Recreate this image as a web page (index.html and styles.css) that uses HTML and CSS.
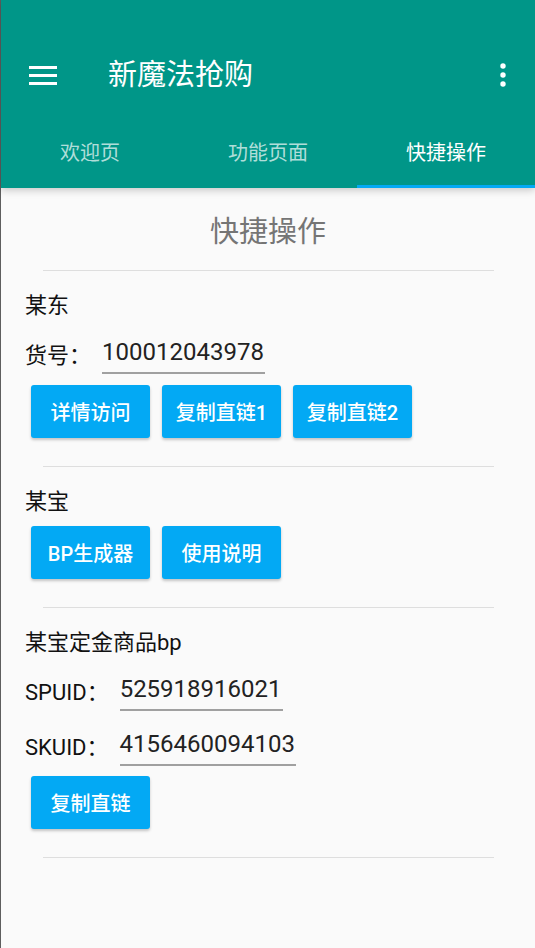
FILE: index.html
```html
<!DOCTYPE html>
<html lang="zh-CN">
<head>
<meta charset="utf-8">
<title>新魔法抢购</title>
<link rel="stylesheet" href="styles.css">
</head>
<body>
<div class="app">
  <header class="appbar">
    <div class="status"></div>
    <div class="toolbar">
      <svg class="menu" width="28" height="20" viewBox="0 0 28 20">
        <rect x="0" y="1" width="28" height="3" fill="#fff"/>
        <rect x="0" y="9" width="28" height="3" fill="#fff"/>
        <rect x="0" y="17" width="28" height="3" fill="#fff"/>
      </svg>
      <div class="title">新魔法抢购</div>
      <svg class="more" width="6" height="24" viewBox="0 0 6 24">
        <circle cx="3" cy="3" r="2.7" fill="#fff"/>
        <circle cx="3" cy="12" r="2.7" fill="#fff"/>
        <circle cx="3" cy="21" r="2.7" fill="#fff"/>
      </svg>
    </div>
    <nav class="tabs">
      <div class="tab">欢迎页</div>
      <div class="tab">功能页面</div>
      <div class="tab active">快捷操作</div>
    </nav>
  </header>

  <main class="content">
    <h1 class="page-title">快捷操作</h1>
    <hr class="divider">

    <section class="section">
      <div class="sec-title">某东</div>
      <div class="field-row">
        <span class="label">货号：</span>
        <span class="field">100012043978</span>
      </div>
      <div class="btn-row">
        <button class="btn">详情访问</button>
        <button class="btn">复制直链1</button>
        <button class="btn">复制直链2</button>
      </div>
    </section>
    <hr class="divider">

    <section class="section">
      <div class="sec-title">某宝</div>
      <div class="btn-row tight">
        <button class="btn">BP生成器</button>
        <button class="btn">使用说明</button>
      </div>
    </section>
    <hr class="divider">

    <section class="section">
      <div class="sec-title">某宝定金商品bp</div>
      <div class="field-row">
        <span class="label">SPUID：</span>
        <span class="field">525918916021</span>
      </div>
      <div class="field-row second">
        <span class="label">SKUID：</span>
        <span class="field">4156460094103</span>
      </div>
      <div class="btn-row short">
        <button class="btn">复制直链</button>
      </div>
    </section>
    <hr class="divider">
  </main>
</div>
</body>
</html>
```

FILE: styles.css
```css
html, body {
  margin: 0;
  padding: 0;
  height: 100%;
  background: #fafafa;
}
body {
  font-family: Roboto, "Noto Sans CJK SC", sans-serif;
}
.app {
  min-height: 100%;
  border-left: 1px solid #5e5e5e;
  box-sizing: border-box;
  background: #fafafa;
}
.appbar {
  background: #009688;
  height: 188px;
  box-shadow: 0 2px 8px rgba(0, 0, 0, 0.22);
  display: flex;
  flex-direction: column;
  position: relative;
}
.status {
  height: 30px;
}
.toolbar {
  height: 90px;
  display: flex;
  align-items: center;
  padding: 0 29px 0 28px;
}
.menu {
  flex: none;
  display: block;
}
.title {
  flex: 1;
  margin-left: 51px;
  color: #fff;
  font-size: 29px;
  line-height: 40px;
}
.more {
  flex: none;
  display: block;
}
.tabs {
  flex: 1;
  display: grid;
  grid-template-columns: 1fr 1fr 1fr;
}
.tab {
  display: flex;
  align-items: center;
  justify-content: center;
  color: rgba(255, 255, 255, 0.7);
  font-size: 20px;
  padding-bottom: 2px;
  box-sizing: border-box;
  border-bottom: 3px solid transparent;
}
.tab.active {
  color: #fff;
  border-bottom-color: #03a9f4;
}
.content {
  padding: 24px 0 0;
}
.page-title {
  margin: 0;
  font-weight: 400;
  font-size: 29px;
  line-height: 40px;
  text-align: center;
  color: #757575;
}
.divider {
  margin: 18px 41px 0 42px;
  border: 0;
  height: 1px;
  background: #dedede;
}
.section {
  padding: 20px 0 28px 24px;
}
.sec-title {
  font-size: 22px;
  line-height: 30px;
  color: #111;
}
.field-row {
  display: flex;
  align-items: center;
  margin-top: 11px;
  height: 42px;
}
.field-row.second {
  margin-top: 13px;
}
.label {
  font-size: 22px;
  color: #111;
  margin-right: 11px;
}
.field {
  font-size: 24px;
  line-height: 40px;
  color: #222;
  border-bottom: 2px solid #a0a0a0;
  padding: 0 1px 0 0;
}
.btn-row {
  display: flex;
  gap: 12px;
  margin-top: 11px;
  padding-left: 6px;
}
.btn-row.tight {
  margin-top: 9px;
}
.btn-row.short {
  margin-top: 10px;
}
.btn {
  width: 119px;
  height: 53px;
  border: 0;
  border-radius: 3px;
  background: #03a9f4;
  color: #fff;
  font-family: Roboto, "Noto Sans CJK SC", sans-serif;
  font-size: 20px;
  font-weight: 500;
  padding: 0;
  box-shadow: 0 2px 3px rgba(0, 0, 0, 0.22);
}
.section + .divider {
  margin-top: 0;
}
```
